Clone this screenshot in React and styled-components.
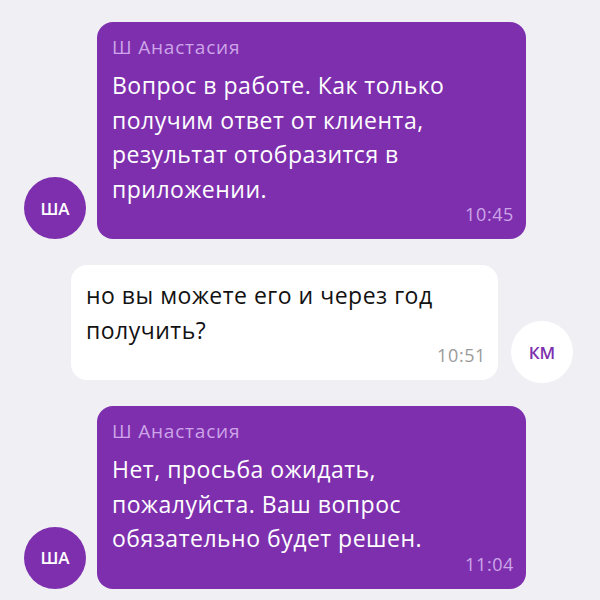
import React from 'react'
import styled, { createGlobalStyle } from 'styled-components'

const GlobalStyle = createGlobalStyle`
  html, body {
    margin: 0;
    padding: 0;
    background: #efeff4;
    font-family: "Open Sans", "Noto Sans", sans-serif;
  }
`

const Feed = styled.div`
  width: 600px;
  height: 600px;
  overflow: hidden;
  box-sizing: border-box;
  padding-top: 22px;
  display: flex;
  flex-direction: column;
  gap: 26px;
`

const Row = styled.div`
  display: flex;
  align-items: flex-end;
  gap: ${p => (p.$out ? '13px' : '11px')};
  justify-content: ${p => (p.$out ? 'flex-end' : 'flex-start')};
  padding: ${p => (p.$out ? '0 27px 0 0' : '0 0 0 24px')};
`

const Avatar = styled.div`
  width: 62px;
  height: 62px;
  flex: none;
  border-radius: 50%;
  display: flex;
  align-items: center;
  justify-content: center;
  background: ${p => (p.$light ? '#ffffff' : '#7e2fae')};
  color: ${p => (p.$light ? '#7e2fae' : '#ffffff')};
  font-size: 17px;
  font-weight: 600;
  margin-bottom: ${p => (p.$light ? '-3px' : '0')};
`

const Bubble = styled.div`
  width: ${p => (p.$out ? '427px' : '429px')};
  box-sizing: border-box;
  border-radius: 16px;
  padding: 13px 12px 14px 15px;
  background: ${p => (p.$out ? '#ffffff' : '#7e2fae')};
  color: ${p => (p.$out ? '#121212' : '#ffffff')};
`

const Author = styled.div`
  font-size: 19px;
  line-height: 24px;
  letter-spacing: 0.8px;
  color: #cda5e8;
  margin-bottom: 9px;
`

const Text = styled.div`
  font-size: 23px;
  line-height: 34.5px;
  letter-spacing: 0.5px;
`

const Time = styled.div`
  text-align: right;
  font-size: 18px;
  line-height: 22px;
  letter-spacing: 0.6px;
  margin-top: -3px;
  color: ${p => (p.$out ? '#9a9a9a' : '#cda5e8')};
`

export default function App() {
  return (
    <>
      <GlobalStyle />
      <Feed>
        <Row>
          <Avatar>ША</Avatar>
          <Bubble>
            <Author>Ш Анастасия</Author>
            <Text>
              Вопрос в работе. Как только<br />
              получим ответ от клиента,<br />
              результат отобразится в<br />
              приложении.
            </Text>
            <Time>10:45</Time>
          </Bubble>
        </Row>
        <Row $out>
          <Bubble $out>
            <Text>
              но вы можете его и через год<br />
              получить?
            </Text>
            <Time $out>10:51</Time>
          </Bubble>
          <Avatar $light>КМ</Avatar>
        </Row>
        <Row>
          <Avatar>ША</Avatar>
          <Bubble>
            <Author>Ш Анастасия</Author>
            <Text>
              Нет, просьба ожидать,<br />
              пожалуйста. Ваш вопрос<br />
              обязательно будет решен.
            </Text>
            <Time>11:04</Time>
          </Bubble>
        </Row>
      </Feed>
    </>
  )
}
